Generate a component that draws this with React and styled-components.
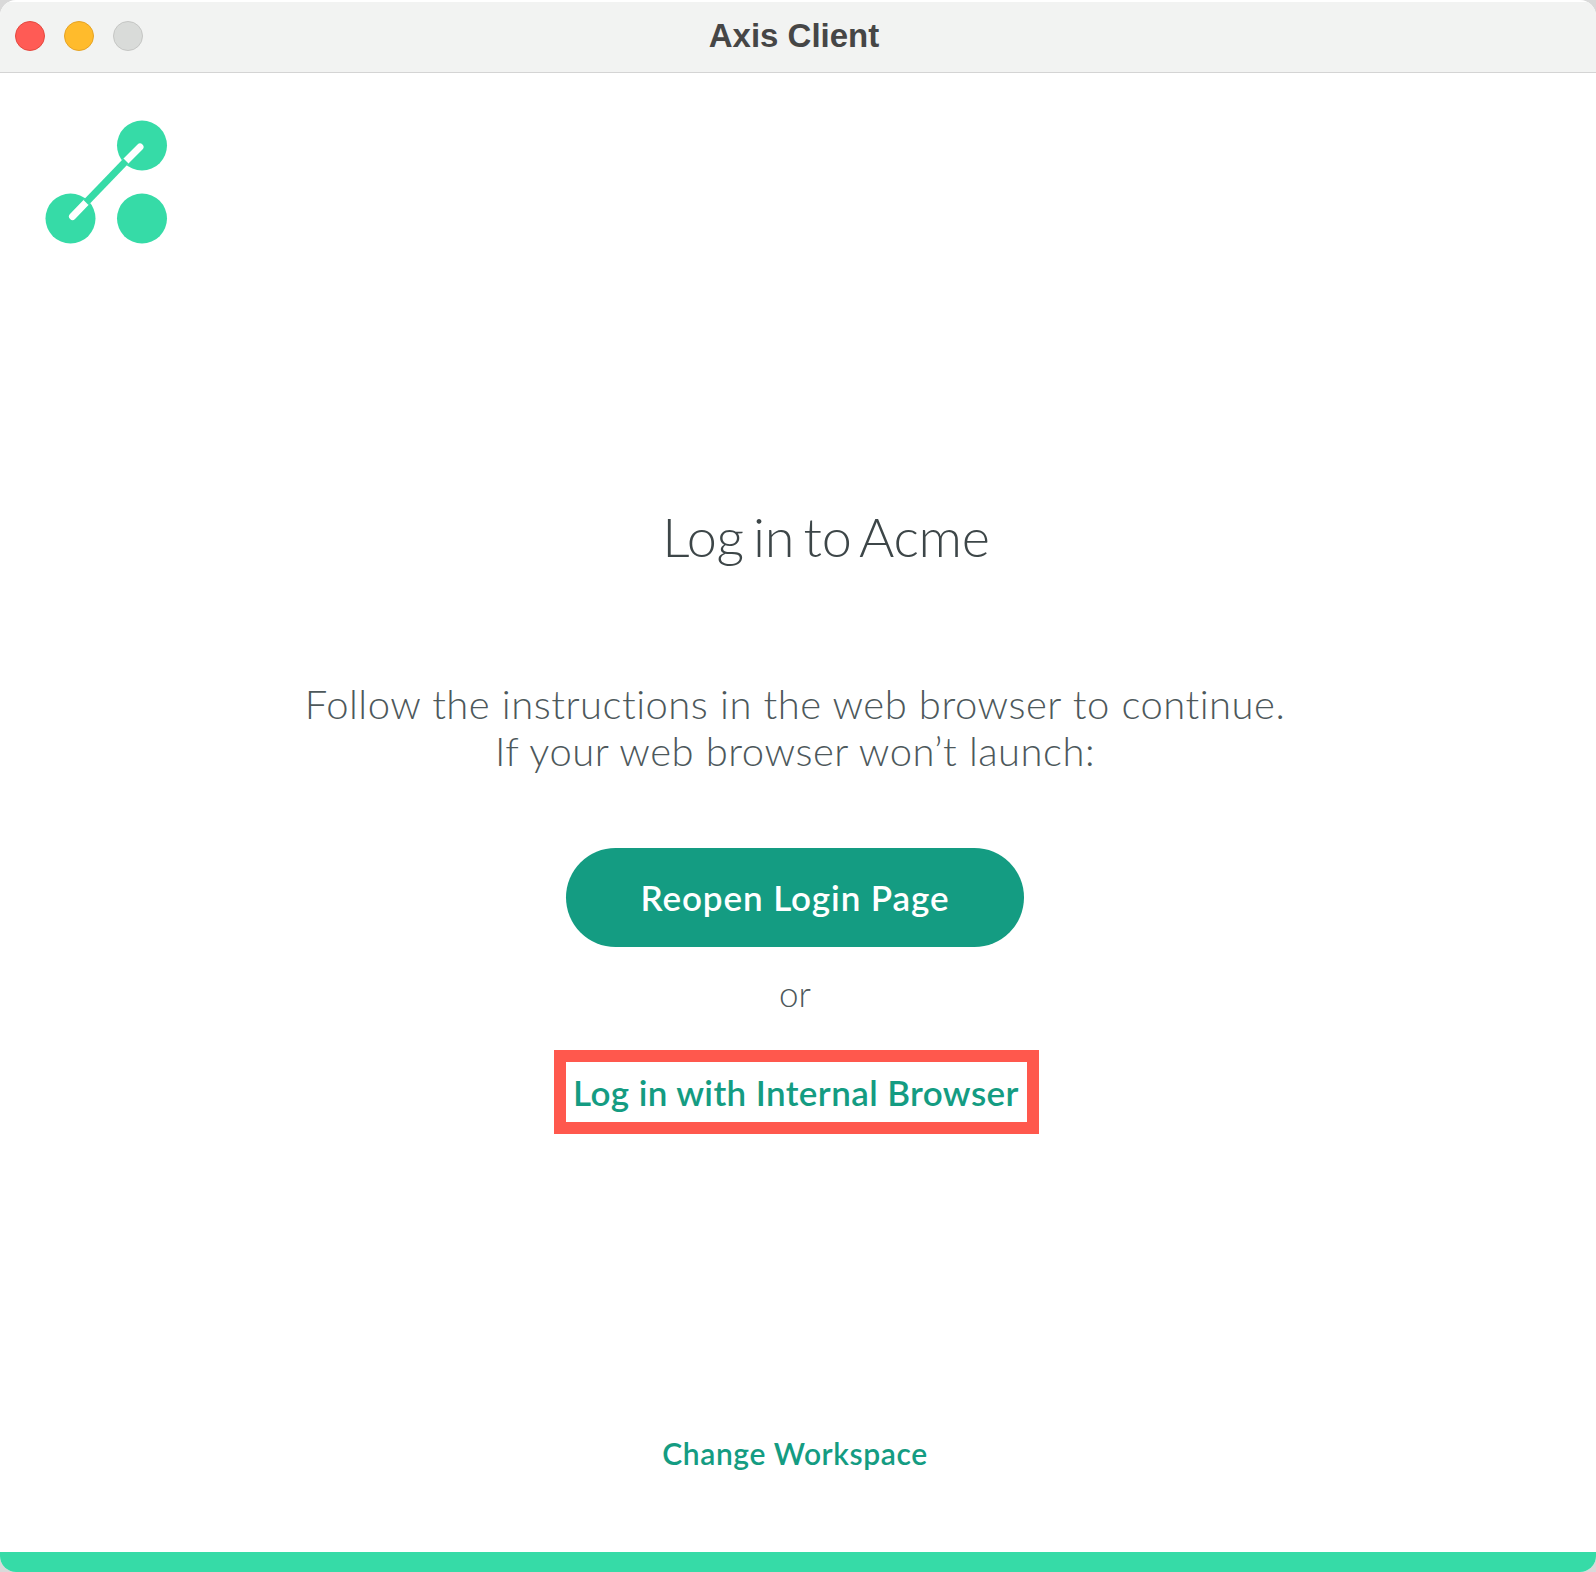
import React from "react";
import styled, { createGlobalStyle } from "styled-components";

const GlobalStyle = createGlobalStyle`
  html, body {
    margin: 0;
    padding: 0;
    background: #d9d9d9;
  }
  body {
    font-family: "Lato", "Open Sans", sans-serif;
  }
`;

const Window = styled.div`
  width: 1596px;
  height: 1572px;
  display: flex;
  flex-direction: column;
  background: #fff;
  border-radius: 16px;
  overflow: hidden;
`;

const TitleBar = styled.header`
  position: relative;
  flex: none;
  height: 70px;
  margin-top: 2px;
  padding-right: 8px;
  display: flex;
  align-items: center;
  justify-content: center;
  background: #f2f3f2;
  border-bottom: 1px solid #d4d4d4;
`;

const Lights = styled.div`
  position: absolute;
  left: 15px;
  top: 19px;
  display: flex;
  gap: 19px;
`;

const Light = styled.span`
  width: 30px;
  height: 30px;
  box-sizing: border-box;
  border-radius: 50%;
  background: ${(p) => p.$fill};
  border: 1px solid ${(p) => p.$edge};
`;

const Title = styled.h1`
  margin: -3px 0 0;
  font-family: "Liberation Sans", Arial, sans-serif;
  font-size: 33px;
  font-weight: 700;
  color: #464646;
`;

const Content = styled.main`
  flex: 1;
  padding-right: 6px;
  display: flex;
  flex-direction: column;
  align-items: center;
`;

const LogoRow = styled.div`
  align-self: stretch;
  padding: 46px 0 0 45px;
  line-height: 0;
`;

const Heading = styled.h2`
  margin: 263px 0 0 62px;
  font-size: 54px;
  line-height: 60px;
  font-weight: 300;
  letter-spacing: -0.3px;
  word-spacing: -5px;
  color: #3d4648;
`;

const Instructions = styled.p`
  margin: 114px 0 0;
  font-size: 40px;
  line-height: 47px;
  font-weight: 300;
  letter-spacing: 0.5px;
  word-spacing: 0.3px;
  text-align: center;
  color: #4d585b;
`;

const ReopenButton = styled.button`
  width: 458px;
  height: 99px;
  margin-top: 73px;
  padding: 0 0 2px;
  border: none;
  border-radius: 50px;
  background: #149c82;
  color: #fff;
  font-family: inherit;
  font-size: 35px;
  font-weight: 600;
  letter-spacing: 0.9px;
`;

const Or = styled.div`
  margin-top: 26px;
  font-size: 35px;
  line-height: 40px;
  font-weight: 300;
  color: #4d585b;
`;

const Highlight = styled.div`
  margin: 37px 0 0 2px;
  width: 485px;
  height: 84px;
  box-sizing: border-box;
  border: 12px solid #ff584d;
  display: flex;
  align-items: center;
  justify-content: center;
`;

const TextLink = styled.a`
  font-size: ${(p) => p.$size}px;
  font-weight: 600;
  letter-spacing: ${(p) => p.$spacing}px;
  color: #149c82;
  white-space: nowrap;
`;

const Footer = styled.div`
  margin-top: auto;
  padding-bottom: 81px;
`;

const ProgressBar = styled.div`
  flex: none;
  height: 20px;
  background: #36dba7;
`;

const Logo = () => (
  <svg width="125" height="125" viewBox="0 0 125 125">
    <g fill="#36dba7">
      <circle cx="97" cy="26.5" r="25" />
      <circle cx="25.5" cy="99.5" r="25" />
      <circle cx="97" cy="99.5" r="25" />
    </g>
    <path d="M27.5 97.5 L41 83.5 M81 42 L95 28" stroke="#fff" strokeWidth="7" strokeLinecap="round" />
    <path d="M41 83.5 L81 42" stroke="#36dba7" strokeWidth="7" />
  </svg>
);

export default function App() {
  return (
    <>
      <GlobalStyle />
      <Window>
        <TitleBar>
          <Lights>
            <Light $fill="#ff5b55" $edge="#e5483f" />
            <Light $fill="#ffbb2c" $edge="#e6a325" />
            <Light $fill="#d9dbd9" $edge="#c5c6c4" />
          </Lights>
          <Title>Axis Client</Title>
        </TitleBar>
        <Content>
          <LogoRow>
            <Logo />
          </LogoRow>
          <Heading>Log in to Acme</Heading>
          <Instructions>
            Follow the instructions in the web browser to continue.
            <br />
            If your web browser won’t launch:
          </Instructions>
          <ReopenButton>Reopen Login Page</ReopenButton>
          <Or>or</Or>
          <Highlight>
            <TextLink $size={35} $spacing={0.4}>Log in with Internal Browser</TextLink>
          </Highlight>
          <Footer>
            <TextLink $size={30} $spacing={0.6}>Change Workspace</TextLink>
          </Footer>
        </Content>
        <ProgressBar />
      </Window>
    </>
  );
}
